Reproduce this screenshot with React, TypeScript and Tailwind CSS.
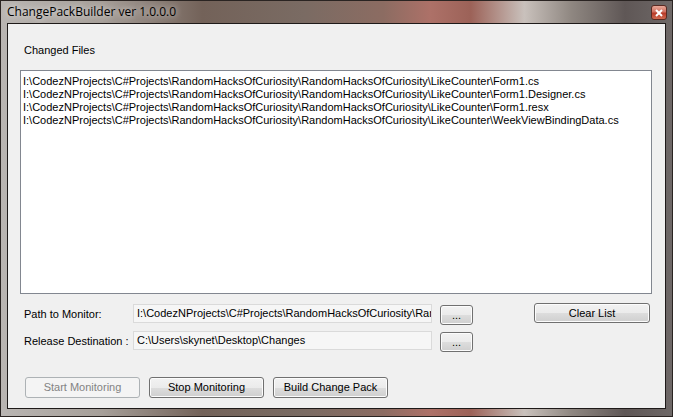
const files = [
  'I:\\CodezNProjects\\C#Projects\\RandomHacksOfCuriosity\\RandomHacksOfCuriosity\\LikeCounter\\Form1.cs',
  'I:\\CodezNProjects\\C#Projects\\RandomHacksOfCuriosity\\RandomHacksOfCuriosity\\LikeCounter\\Form1.Designer.cs',
  'I:\\CodezNProjects\\C#Projects\\RandomHacksOfCuriosity\\RandomHacksOfCuriosity\\LikeCounter\\Form1.resx',
  'I:\\CodezNProjects\\C#Projects\\RandomHacksOfCuriosity\\RandomHacksOfCuriosity\\LikeCounter\\WeekViewBindingData.cs',
];

function WinButton({ label, disabled, className }: { label: string; disabled?: boolean; className: string }) {
  if (disabled) {
    return (
      <div className={`flex items-center justify-center rounded-[3px] border border-[#adb2b5] bg-[#f4f4f4] text-[#838383] ${className}`}>
        {label}
      </div>
    );
  }
  return (
    <div
      className={`flex items-center justify-center rounded-[3px] border border-[#707070] bg-[linear-gradient(#f2f2f2_0%,#ebebeb_50%,#dddddd_51%,#cfcfcf_100%)] text-black shadow-[inset_0_0_0_1px_#fcfcfc] ${className}`}
    >
      {label}
    </div>
  );
}

function TextBox({ value }: { value: string }) {
  return (
    <div className="h-[19px] w-[299px] overflow-hidden whitespace-nowrap border border-[#dadada] bg-[#f6f6f6] pl-[3px] pt-[2px] leading-[13px]">
      {value}
    </div>
  );
}

export default function App() {
  return (
    <div
      className="flex h-[417px] w-[673px] flex-col border border-[#2a2422] bg-[linear-gradient(to_right,#b9b5b2_0%,#a69f99_15%,#736259_30%,#7a6b63_45%,#8c6c62_57%,#ad7168_64%,#9c6258_70%,#c9c1bc_78%,#8f8781_85%,#5f5756_93%,#6e6867_100%)] font-['Liberation_Sans',Arial,sans-serif] text-[11px] text-black"
    >
      <div className="flex h-[22px] items-center justify-between pl-[6px] pr-[5px]">
        <span className="font-['Open_Sans',sans-serif] text-[12px] text-black [text-shadow:0_0_6px_rgba(255,255,255,0.9)]">
          ChangePackBuilder ver 1.0.0.0
        </span>
        <div className="mt-[1px] flex h-[15px] w-[16px] items-center justify-center rounded-[3px] border border-[#5a2a22] bg-[linear-gradient(#e8a898_0%,#d07060_45%,#b83a28_55%,#d06a50_100%)]">
          <svg width="8" height="8" viewBox="0 0 8 8">
            <path d="M1 1L7 7M7 1L1 7" stroke="#fff" strokeWidth="2" />
          </svg>
        </div>
      </div>
      <div className="mx-[6px] mb-[7px] flex flex-1 flex-col border border-[#1e1a19] bg-[#f0f0f0] pl-[12px] pr-[13px]">
        <div className="ml-[4px] mt-[20px] leading-[13px]">Changed Files</div>
        <div className="mt-[13px] h-[224px] border border-[#828790] bg-white pl-[2px] pt-[4px] leading-[13px]">
          {files.map(f => (
            <div key={f} className="whitespace-nowrap">{f}</div>
          ))}
        </div>
        <div className="mt-[9px] flex items-start">
          <div className="ml-[4px] mt-[5px] w-[109px] leading-[13px]">Path to Monitor:</div>
          <div className="mt-[1px]">
            <TextBox value="I:\CodezNProjects\C#Projects\RandomHacksOfCuriosity\Ran" />
          </div>
          <WinButton label="..." className="ml-[8px] mt-[2px] h-[20px] w-[33px]" />
          <WinButton label="Clear List" className="ml-[61px] h-[20px] w-[116px]" />
        </div>
        <div className="mt-[6px] flex items-start">
          <div className="ml-[4px] mt-[4px] w-[109px] leading-[13px]">Release Destination :</div>
          <TextBox value="C:\Users\skynet\Desktop\Changes" />
          <WinButton label="..." className="ml-[8px] mt-[1px] h-[20px] w-[33px]" />
        </div>
        <div className="ml-[5px] mt-[25px] flex gap-[9px]">
          <WinButton label="Start Monitoring" disabled className="h-[21px] w-[115px]" />
          <WinButton label="Stop Monitoring" className="h-[21px] w-[115px]" />
          <WinButton label="Build Change Pack" className="h-[21px] w-[115px]" />
        </div>
      </div>
    </div>
  );
}
